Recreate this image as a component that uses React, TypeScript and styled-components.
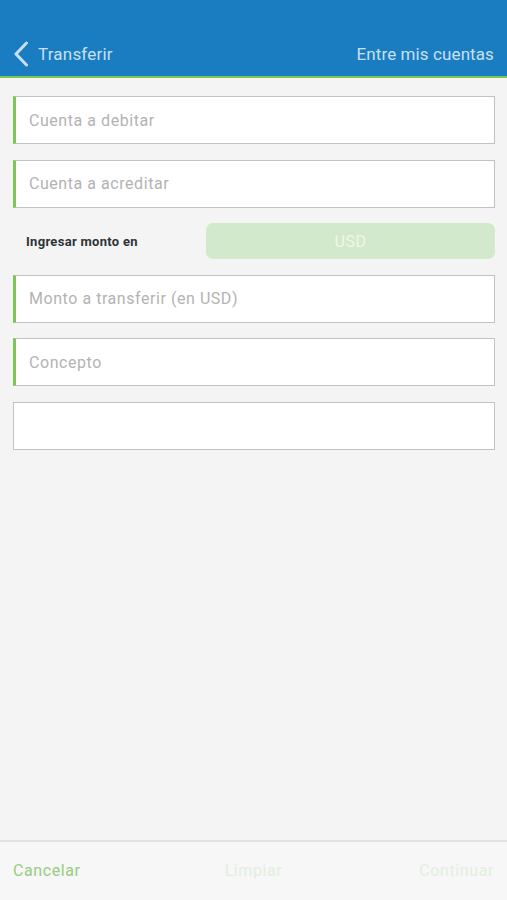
import React from "react";
import styled, { createGlobalStyle } from "styled-components";

const Global = createGlobalStyle`
  html, body { margin: 0; padding: 0; background: #f4f4f4; }
  body { font-family: Roboto, "Noto Sans", "Liberation Sans", sans-serif; }
  * { box-sizing: border-box; }
`;

const Page = styled.div`
  display: flex;
  flex-direction: column;
  height: 100vh;
  background: #f4f4f4;
`;

const Header = styled.header`
  height: 78px;
  background: #1a7cc1;
  border-bottom: 2px solid #7cc552;
  display: flex;
  align-items: flex-end;
  padding: 0 13px 6px 13px;
`;

const HeaderRow = styled.div`
  flex: 1;
  display: flex;
  align-items: center;
  justify-content: space-between;
  height: 32px;
`;

const Back = styled.div`
  display: flex;
  align-items: center;
  gap: 9px;
  color: #c9e0f1;
  font-size: 17px;
  letter-spacing: 0.2px;
`;

const Title = styled.div`
  color: #c9e0f1;
  font-size: 17px;
  letter-spacing: 0.1px;
`;

const Form = styled.main`
  flex: 1;
  display: flex;
  flex-direction: column;
  gap: 15.5px;
  padding: 18px 12px 0 13px;
`;

const Field = styled.div<{ $accent?: boolean }>`
  height: 48px;
  background: #fff;
  border: 1px solid #c2c2c2;
  border-left: ${(p) => (p.$accent ? "3px solid #7dc657" : "1px solid #c2c2c2")};
  display: flex;
  align-items: center;
  padding-left: 13px;
  font-size: 16px;
  color: #b3b3b3;
  letter-spacing: 0.55px;
`;

const AmountRow = styled.div`
  height: 36px;
  display: flex;
  align-items: center;
`;

const AmountLabel = styled.div`
  width: 193px;
  padding-left: 13px;
  font-size: 13px;
  font-weight: 700;
  color: #2e3338;
  letter-spacing: 0.3px;
`;

const CurrencyButton = styled.div`
  flex: 1;
  height: 36px;
  border-radius: 7px;
  background: #d3e9cc;
  color: #eef7ea;
  display: flex;
  align-items: center;
  justify-content: center;
  font-size: 16px;
  letter-spacing: 0.5px;
`;

const Footer = styled.footer`
  height: 60px;
  border-top: 2px solid #e2e2e2;
  background: #f7f7f7;
  display: flex;
  align-items: center;
  justify-content: space-between;
  padding: 0 13px 0 13px;
  font-size: 16px;
  letter-spacing: 0.6px;
`;

const Action = styled.div<{ $color: string }>`
  color: ${(p) => p.$color};
  width: 120px;
  padding-bottom: 2px;
  &:nth-child(2) { text-align: center; }
  &:last-child { text-align: right; }
`;

export default function App() {
  return (
    <>
      <Global />
      <Page>
        <Header>
          <HeaderRow>
            <Back>
              <svg width="16" height="26" viewBox="0 0 16 26">
                <path d="M13.5 2 L3 13 L13.5 24" fill="none" stroke="#c9e0f1" strokeWidth="3" strokeLinecap="round" strokeLinejoin="round" />
              </svg>
              Transferir
            </Back>
            <Title>Entre mis cuentas</Title>
          </HeaderRow>
        </Header>
        <Form>
          <Field $accent>Cuenta a debitar</Field>
          <Field $accent>Cuenta a acreditar</Field>
          <AmountRow>
            <AmountLabel>Ingresar monto en</AmountLabel>
            <CurrencyButton>USD</CurrencyButton>
          </AmountRow>
          <Field $accent>Monto a transferir (en USD)</Field>
          <Field $accent>Concepto</Field>
          <Field />
        </Form>
        <Footer>
          <Action $color="#96cd80">Cancelar</Action>
          <Action $color="#e3eedf">Limpiar</Action>
          <Action $color="#e3eedf">Continuar</Action>
        </Footer>
      </Page>
    </>
  );
}
